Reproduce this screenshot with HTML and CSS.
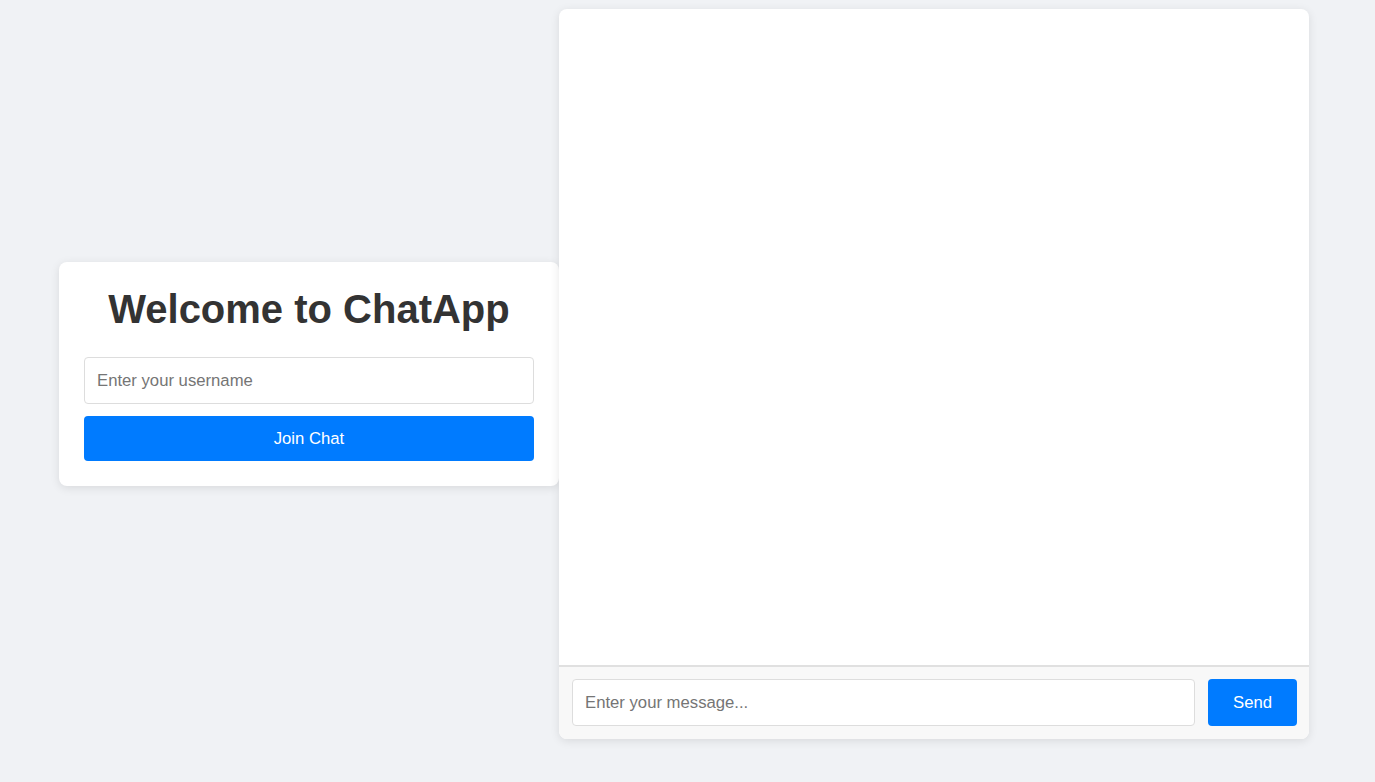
FILE: index.html
```html
<!DOCTYPE html>
<html lang="en">
<head>
<meta charset="utf-8">
<title>ChatApp</title>
<link rel="stylesheet" href="styles.css">
</head>
<body>
<div class="page">
  <div class="login-card">
    <h1 class="login-title">Welcome to ChatApp</h1>
    <input class="login-input" type="text" placeholder="Enter your username">
    <button class="login-button">Join Chat</button>
  </div>
  <div class="chat">
    <div class="chat-messages"></div>
    <div class="chat-input-bar">
      <input class="chat-input" type="text" placeholder="Enter your message...">
      <button class="send-button">Send</button>
    </div>
  </div>
</div>
</body>
</html>
```
FILE: styles.css
```css
* { box-sizing: border-box; }
html, body { margin: 0; padding: 0; }
body {
  background: #f0f2f5;
  font-family: "Liberation Sans", Arial, sans-serif;
  width: 1375px;
  height: 782px;
  overflow: hidden;
}
.page {
  display: flex;
  align-items: center;
  padding: 9px 0 0 59px;
  height: 739px;
}
.login-card {
  width: 500px;
  background: #fff;
  border-radius: 8px;
  box-shadow: 0 2px 10px rgba(0,0,0,0.1);
  padding: 25px;
  display: flex;
  flex-direction: column;
}
.login-title {
  margin: 0 0 26px;
  font-size: 40px;
  line-height: 44px;
  font-weight: bold;
  text-align: center;
  color: #333;
}
.login-input {
  height: 47px;
  padding: 0 12px;
  border: 1px solid #ddd;
  border-radius: 4px;
  font: 16.7px "Liberation Sans", Arial, sans-serif;
  color: #333;
  outline: none;
}
.login-input::placeholder, .chat-input::placeholder { color: #757575; }
.login-button {
  margin-top: 12px;
  height: 45px;
  border: none;
  border-radius: 4px;
  background: #007bff;
  color: #fff;
  font: 16.7px "Liberation Sans", Arial, sans-serif;
  cursor: pointer;
}
.chat {
  width: 750px;
  height: 730px;
  background: #fff;
  border-radius: 8px;
  box-shadow: 0 2px 10px rgba(0,0,0,0.1);
  display: flex;
  flex-direction: column;
  overflow: hidden;
}
.chat-messages { flex: 1; }
.chat-input-bar {
  border-top: 2px solid #e0e0e0;
  background: #f8f8f8;
  display: flex;
  gap: 13px;
  padding: 12px 12px 13px 13px;
}
.chat-input {
  flex: 1;
  height: 47px;
  padding: 0 12px;
  border: 1px solid #ddd;
  border-radius: 4px;
  font: 16.7px "Liberation Sans", Arial, sans-serif;
  color: #333;
  background: #fff;
  outline: none;
}
.send-button {
  width: 89px;
  height: 47px;
  border: none;
  border-radius: 4px;
  background: #007bff;
  color: #fff;
  font: 16.7px "Liberation Sans", Arial, sans-serif;
  cursor: pointer;
}
```
